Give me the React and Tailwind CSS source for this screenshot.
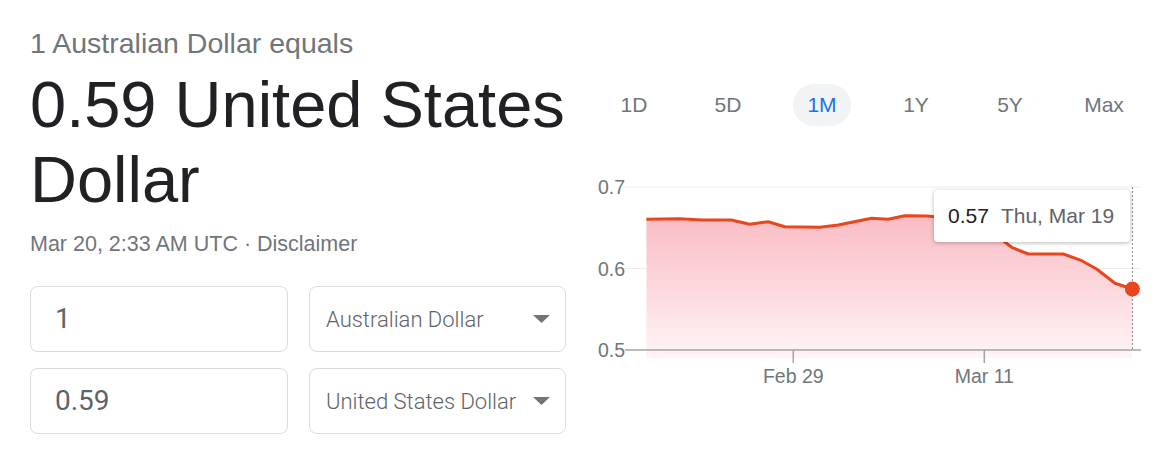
import React from "react";

const ranges = ["1D", "5D", "1M", "1Y", "5Y", "Max"];

// chart points, in svg coords (svg origin sits at page x 587, y 170)
const points = [
  [59.4, 49.3], [92.6, 48.7], [114.8, 50], [144.3, 50], [162.7, 54.3],
  [181.2, 51.7], [197.8, 56.7], [232.9, 57.3], [251.3, 55], [284.5, 48.3],
  [301.1, 49.3], [317.7, 45.7], [339.9, 46], [373, 49], [403, 58],
  [417.4, 71.7], [424.7, 77.3], [441.3, 84], [476.4, 84], [494.8, 90.7],
  [509.6, 99], [528, 113.3], [545.4, 119],
];

const linePath = points.map((p, i) => (i ? "L" : "M") + p[0] + " " + p[1]).join(" ");
const areaPath = linePath + " L545.4 188 L59.4 188 Z";

function AmountBox({ value }) {
  return (
    <div className="h-[66px] w-[258px] rounded-[8px] border border-[#dadce0] flex items-center pl-[24px] text-[28px] text-[#5f6368] font-['Roboto',sans-serif]">
      {value}
    </div>
  );
}

function CurrencySelect({ label }) {
  return (
    <div className="h-[66px] w-[257px] rounded-[8px] border border-[#dadce0] flex items-center pl-[16px] pr-[15px] font-['Roboto',sans-serif]">
      <span className="flex-1 text-[22px] font-light text-[#5f6368] whitespace-nowrap">{label}</span>
      <svg width="17" height="8" viewBox="0 0 17 8">
        <path d="M0 0 L17 0 L8.5 8 Z" fill="#70757a" />
      </svg>
    </div>
  );
}

function Chart() {
  return (
    <div className="relative mt-[44px] h-[220px] w-[564px]">
      <svg width="564" height="220" viewBox="0 0 564 220" className="block">
        <defs>
          <linearGradient id="fillGrad" x1="0" y1="46" x2="0" y2="188" gradientUnits="userSpaceOnUse">
            <stop offset="0" stopColor="#f9bcc4" />
            <stop offset="1" stopColor="#fff4f6" />
          </linearGradient>
        </defs>
        <line x1="38" y1="17" x2="554" y2="17" stroke="#ececec" strokeWidth="1" />
        <line x1="38" y1="98.5" x2="554" y2="98.5" stroke="#ececec" strokeWidth="1" />
        <path d={areaPath} fill="url(#fillGrad)" />
        <line x1="38" y1="180" x2="554" y2="180" stroke="#a3a3a3" strokeWidth="1.5" />
        <line x1="206.3" y1="180" x2="206.3" y2="193" stroke="#a3a3a3" strokeWidth="1.5" />
        <line x1="397.3" y1="180" x2="397.3" y2="193" stroke="#a3a3a3" strokeWidth="1.5" />
        <line x1="545.4" y1="17" x2="545.4" y2="180" stroke="#80868b" strokeWidth="1" strokeDasharray="2 2" />
        <path d={linePath} fill="none" stroke="#e8471d" strokeWidth="3" strokeLinejoin="round" />
        <circle cx="545.4" cy="119" r="7.5" fill="#e8471d" />
        <g fontFamily="'Liberation Sans', Arial, sans-serif" fontSize="19.5" fill="#70757a">
          <text x="38" y="24" textAnchor="end">0.7</text>
          <text x="38" y="105.5" textAnchor="end">0.6</text>
          <text x="38" y="187" textAnchor="end">0.5</text>
          <text x="206.3" y="213" textAnchor="middle">Feb 29</text>
          <text x="397.3" y="213" textAnchor="middle">Mar 11</text>
        </g>
      </svg>
      <div className="absolute left-[347px] top-[20px] h-[52px] w-[196px] rounded-[4px] bg-white shadow-[0_1px_4px_rgba(0,0,0,0.28)] flex items-center pl-[14px] gap-[12px] text-[21px] font-['Liberation_Sans',Arial,sans-serif] whitespace-nowrap">
        <span className="text-[#202124]">0.57</span>
        <span className="text-[#5f6368]">Thu, Mar 19</span>
      </div>
    </div>
  );
}

export default function App() {
  return (
    <div className="w-[1158px] h-[460px] bg-white flex font-['Liberation_Sans',Arial,sans-serif] overflow-hidden">
      <div className="ml-[30px] w-[536px] pt-[26px]">
        <div className="text-[28.5px] leading-[34px] text-[#70757a] whitespace-nowrap">1 Australian Dollar equals</div>
        <div className="mt-[7px] text-[65px] leading-[75px] text-[#202124] whitespace-nowrap">
          0.59 United States
          <br />
          Dollar
        </div>
        <div className="mt-[14px] text-[21.5px] leading-[26px] text-[#70757a] whitespace-nowrap">
          Mar 20, 2:33 AM UTC · Disclaimer
        </div>
        <div className="mt-[29px] flex flex-col gap-[16px]">
          <div className="flex gap-[21px]">
            <AmountBox value="1" />
            <CurrencySelect label="Australian Dollar" />
          </div>
          <div className="flex gap-[21px]">
            <AmountBox value="0.59" />
            <CurrencySelect label="United States Dollar" />
          </div>
        </div>
      </div>

      <div className="ml-[21px] w-[564px] pt-[84px]">
        <div className="flex">
          {ranges.map((r) => (
            <div key={r} className="flex-1 flex justify-center">
              <div
                className={
                  r === "1M"
                    ? "h-[42px] w-[58px] rounded-full bg-[#f1f3f4] flex items-center justify-center text-[21px] text-[#1a73e8]"
                    : "h-[42px] px-[8px] flex items-center justify-center text-[21px] text-[#70757a]"
                }
              >
                {r}
              </div>
            </div>
          ))}
        </div>
        <Chart />
      </div>
    </div>
  );
}
